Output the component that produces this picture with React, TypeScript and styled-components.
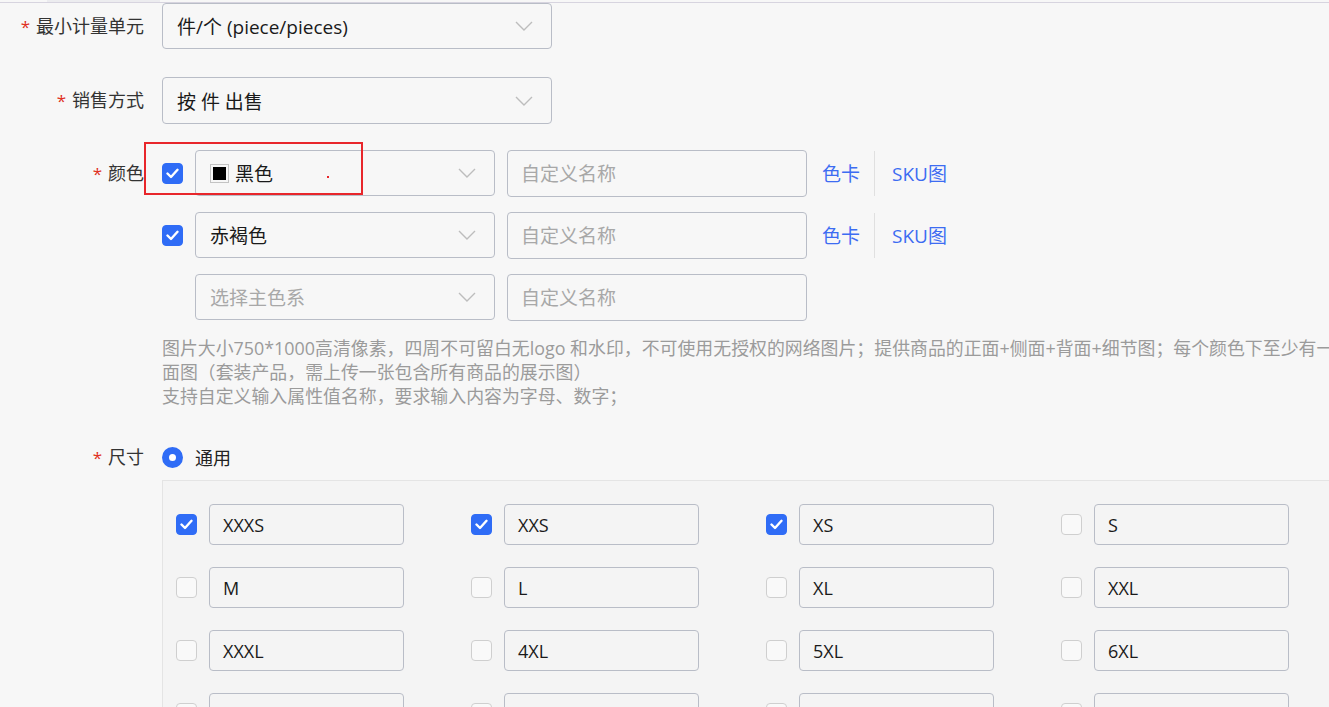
import React from "react";
import styled, { createGlobalStyle } from "styled-components";

const GlobalStyle = createGlobalStyle`
  html, body { margin: 0; padding: 0; }
  body {
    background: #f7f7f7;
    font-family: "Open Sans", "Noto Sans CJK SC", sans-serif;
    color: #222;
    overflow: hidden;
  }
`;

const Page = styled.div`
  width: 100vw;
  height: 100vh;
  overflow: hidden;
`;

const TopBar = styled.div`
  height: 2px;
  border-bottom: 1px solid #d7d4df;
  background: linear-gradient(to right, #f7f7f7 47px, #ececef 47px, #ececef 160px, #f7f7f7 160px);
`;

const Form = styled.div`
  display: flex;
  flex-direction: column;
  width: 1700px;
`;

const Row = styled.div<{ $mt?: number }>`
  display: grid;
  grid-template-columns: 144px 1fr;
  column-gap: 18px;
  align-items: start;
  margin-top: ${(p) => p.$mt ?? 0}px;
`;

const Label = styled.div<{ $h?: number }>`
  text-align: right;
  font-size: 18px;
  color: #333;
  height: ${(p) => p.$h ?? 46}px;
  line-height: ${(p) => p.$h ?? 46}px;
  white-space: nowrap;
`;

const Star = styled.span`
  color: #e0301e;
  margin-right: 6px;
  font-size: 17px;
`;

const SelectBox = styled.div<{ $w: number; $h?: number }>`
  box-sizing: border-box;
  width: ${(p) => p.$w}px;
  height: ${(p) => p.$h ?? 46}px;
  border: 1px solid #b9bdc7;
  border-radius: 4px;
  display: flex;
  align-items: center;
  padding: 0 18px 0 14px;
  font-size: 19px;
  color: #1a1a1a;
  flex-shrink: 0;
`;

const SelectValue = styled.span<{ $placeholder?: boolean }>`
  flex: 1;
  display: flex;
  align-items: center;
  gap: 6px;
  white-space: pre;
  color: ${(p) => (p.$placeholder ? "#a8a8a8" : "#1a1a1a")};
`;

const Swatch = styled.span`
  box-sizing: border-box;
  width: 19px;
  height: 19px;
  border: 1px solid #c3c3c3;
  padding: 2px;
  background: #000;
  background-clip: content-box;
  display: inline-block;
`;

const TextInput = styled.div<{ $w: number; $h?: number; $placeholder?: boolean }>`
  box-sizing: border-box;
  width: ${(p) => p.$w}px;
  height: ${(p) => p.$h ?? 47}px;
  border: 1px solid #b9bdc7;
  border-radius: 4px;
  display: flex;
  align-items: center;
  padding: 0 13px;
  font-size: ${(p) => (p.$placeholder ? 19 : 18)}px;
  color: ${(p) => (p.$placeholder ? "#a8a8a8" : "#1a1a1a")};
  flex-shrink: 0;
`;

const ColorList = styled.div`
  display: flex;
  flex-direction: column;
  gap: 16px;
`;

const ColorLine = styled.div`
  position: relative;
  display: flex;
  align-items: center;
  gap: 12px;
  height: 46px;
`;

const CheckSlot = styled.div`
  width: 21px;
  height: 21px;
  flex-shrink: 0;
`;

const CheckBox = styled.div<{ $checked?: boolean }>`
  box-sizing: border-box;
  width: 21px;
  height: 21px;
  border-radius: 4px;
  flex-shrink: 0;
  display: flex;
  align-items: center;
  justify-content: center;
  background: ${(p) => (p.$checked ? "#2f6cf6" : "#f9f9f9")};
  border: 1px solid ${(p) => (p.$checked ? "#2f6cf6" : "#cfcfcf")};
`;

const Link = styled.span`
  color: #3d6cf2;
  font-size: 19px;
  margin-left: 3px;
`;

const Divider = styled.span`
  width: 1px;
  height: 45px;
  background: #e0e0e0;
  margin: 0 2px;
`;

const Annotation = styled.div`
  position: absolute;
  left: -18px;
  top: -8px;
  width: 219px;
  height: 53px;
  box-sizing: border-box;
  border: 2px solid #e8262b;
  pointer-events: none;
`;

const RedDot = styled.span`
  position: absolute;
  left: 181px;
  top: 32px;
  width: 2px;
  height: 2px;
  background: #e8262b;
`;

const Help = styled.div`
  margin-top: 16px;
  font-size: 17.9px;
  line-height: 24px;
  color: #9b9b9b;
  white-space: nowrap;
`;

const RadioLine = styled.div`
  display: flex;
  align-items: center;
  gap: 12px;
  height: 24px;
  font-size: 18px;
  color: #222;
`;

const Radio = styled.span`
  box-sizing: border-box;
  width: 21px;
  height: 21px;
  border-radius: 50%;
  border: 7px solid #2f6cf6;
  background: #fff;
`;

const SizePanel = styled.div`
  margin-top: 11px;
  border-top: 1px solid #e4e4e4;
  border-left: 1px solid #e4e4e4;
  background: #f4f4f4;
  padding: 23px 0 0 13px;
  height: 400px;
`;

const SizeGrid = styled.div`
  display: grid;
  grid-template-columns: repeat(4, 295px);
  row-gap: 22px;
`;

const SizeCell = styled.div`
  display: flex;
  align-items: center;
  gap: 12px;
`;

const Chevron = () => (
  <svg width="18" height="10" viewBox="0 0 18 10" fill="none">
    <polyline points="1,1 9,9 17,1" stroke="#bdbdbd" strokeWidth="1.4" />
  </svg>
);

const Check = ({ checked }: { checked?: boolean }) => (
  <CheckBox $checked={checked}>
    {checked && (
      <svg width="13" height="11" viewBox="0 0 13 11" fill="none">
        <polyline points="1.5,5.5 5,9 11.5,1.8" stroke="#fff" strokeWidth="2.4" strokeLinecap="round" strokeLinejoin="round" />
      </svg>
    )}
  </CheckBox>
);

const sizes: { name: string; checked?: boolean }[] = [
  { name: "XXXS", checked: true },
  { name: "XXS", checked: true },
  { name: "XS", checked: true },
  { name: "S" },
  { name: "M" },
  { name: "L" },
  { name: "XL" },
  { name: "XXL" },
  { name: "XXXL" },
  { name: "4XL" },
  { name: "5XL" },
  { name: "6XL" },
  { name: "" },
  { name: "" },
  { name: "" },
  { name: "" },
];

export default function App() {
  return (
    <Page>
      <GlobalStyle />
      <TopBar />
      <Form>
        <Row>
          <Label><Star>*</Star>最小计量单元</Label>
          <SelectBox $w={390}>
            <SelectValue>件/个 (piece/pieces)</SelectValue>
            <Chevron />
          </SelectBox>
        </Row>

        <Row $mt={28}>
          <Label $h={47}><Star>*</Star>销售方式</Label>
          <SelectBox $w={390} $h={47}>
            <SelectValue>按 件 出售</SelectValue>
            <Chevron />
          </SelectBox>
        </Row>

        <Row $mt={26}>
          <Label $h={46}><Star>*</Star>颜色</Label>
          <div>
            <ColorList>
              <ColorLine>
                <Check checked />
                <SelectBox $w={300}>
                  <SelectValue><Swatch />黑色</SelectValue>
                  <Chevron />
                </SelectBox>
                <TextInput $w={300} $placeholder>自定义名称</TextInput>
                <Link>色卡</Link>
                <Divider />
                <Link>SKU图</Link>
                <Annotation><RedDot /></Annotation>
              </ColorLine>
              <ColorLine>
                <Check checked />
                <SelectBox $w={300}>
                  <SelectValue>赤褐色</SelectValue>
                  <Chevron />
                </SelectBox>
                <TextInput $w={300} $placeholder>自定义名称</TextInput>
                <Link>色卡</Link>
                <Divider />
                <Link>SKU图</Link>
              </ColorLine>
              <ColorLine>
                <CheckSlot />
                <SelectBox $w={300}>
                  <SelectValue $placeholder>选择主色系</SelectValue>
                  <Chevron />
                </SelectBox>
                <TextInput $w={300} $placeholder>自定义名称</TextInput>
              </ColorLine>
            </ColorList>
            <Help>
              图片大小750*1000高清像素，四周不可留白无logo 和水印，不可使用无授权的网络图片；提供商品的正面+侧面+背面+细节图；每个颜色下至少有一张正
              <br />
              面图（套装产品，需上传一张包含所有商品的展示图）
              <br />
              支持自定义输入属性值名称，要求输入内容为字母、数字；
            </Help>
          </div>
        </Row>

        <Row $mt={37}>
          <Label $h={24}><Star>*</Star>尺寸</Label>
          <div>
            <RadioLine>
              <Radio />
              通用
            </RadioLine>
            <SizePanel>
              <SizeGrid>
                {sizes.map((s, i) => (
                  <SizeCell key={i}>
                    <Check checked={s.checked} />
                    <TextInput $w={195} $h={41}>{s.name}</TextInput>
                  </SizeCell>
                ))}
              </SizeGrid>
            </SizePanel>
          </div>
        </Row>
      </Form>
    </Page>
  );
}
